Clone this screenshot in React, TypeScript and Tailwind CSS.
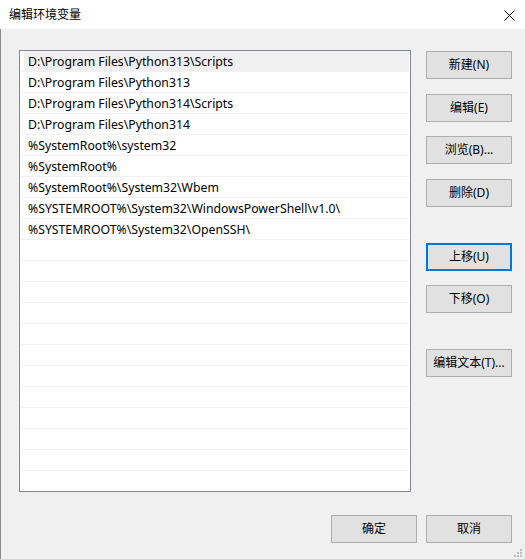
const paths = [
  "D:\\Program Files\\Python313\\Scripts",
  "D:\\Program Files\\Python313",
  "D:\\Program Files\\Python314\\Scripts",
  "D:\\Program Files\\Python314",
  "%SystemRoot%\\system32",
  "%SystemRoot%",
  "%SystemRoot%\\System32\\Wbem",
  "%SYSTEMROOT%\\System32\\WindowsPowerShell\\v1.0\\",
  "%SYSTEMROOT%\\System32\\OpenSSH\\",
];

// the list view always shows 21 grid rows, blank ones included
const rows = [...paths, ...Array(21 - paths.length).fill("")];

const font = { fontFamily: '"Noto Sans", "Noto Sans CJK SC", sans-serif' };

function Button({
  label,
  focused,
  className = "",
}: {
  label: string;
  focused?: boolean;
  className?: string;
}) {
  return (
    <button
      className={`w-[86px] h-[28px] shrink-0 flex items-center justify-center bg-[#e1e1e1] text-[12px] text-black leading-none ${
        focused ? "border-2 border-[#0078d7]" : "border border-[#adadad]"
      } ${className}`}
    >
      {label}
    </button>
  );
}

export default function App() {
  return (
    <div className="w-[525px] h-[559px] flex flex-col bg-[#f0f0f0] overflow-hidden" style={font}>
      {/* Title bar */}
      <div className="h-[29px] shrink-0 bg-white flex items-center justify-between pl-[9px] pr-[10px]">
        <span className="text-[12px] text-black">编辑环境变量</span>
        <svg width="11" height="11" viewBox="0 0 11 11" className="mt-[1px]">
          <path d="M0.5 0.5 L10.5 10.5 M10.5 0.5 L0.5 10.5" stroke="#000" strokeWidth="1" />
        </svg>
      </div>

      {/* Body */}
      <div className="relative flex-1 flex flex-col border-l border-[#8a8a8a] pl-[18px] pr-[13px] pt-[21px]">
        <div className="flex gap-[15px]">
          {/* Path list */}
          <div className="w-[392px] h-[442px] border border-[#828790] bg-white px-[1px] overflow-hidden">
            {rows.map((p, i) => (
              <div key={i} className="h-[21px] shrink-0 border-b border-[#f0f0f0] flex">
                <div
                  className={`flex-1 ml-[3px] flex items-center pl-[4px] pt-[3px] text-[12.25px] text-black whitespace-nowrap ${
                    i === 0 ? "bg-[#f0f0f0]" : ""
                  }`}
                >
                  {p}
                </div>
              </div>
            ))}
          </div>

          {/* Action buttons */}
          <div className="flex flex-col pt-[1px]">
            <Button label="新建(N)" />
            <Button label="编辑(E)" className="mt-[15px]" />
            <Button label="浏览(B)..." className="mt-[14px]" />
            <Button label="删除(D)" className="mt-[15px]" />
            <Button label="上移(U)" focused className="mt-[36px]" />
            <Button label="下移(O)" className="mt-[14px]" />
            <Button label="编辑文本(T)..." className="mt-[36px]" />
          </div>
        </div>

        {/* Dialog buttons */}
        <div className="flex justify-end gap-[9px] mt-[23px]">
          <Button label="确定" />
          <Button label="取消" />
        </div>

        {/* Resize grip */}
        <svg width="9" height="9" viewBox="0 0 9 9" className="absolute right-[2px] bottom-[1px]">
          <g fill="#bcbcbc">
            <rect x="6" y="0" width="2" height="2" />
            <rect x="3" y="3" width="2" height="2" />
            <rect x="6" y="3" width="2" height="2" />
            <rect x="0" y="6" width="2" height="2" />
            <rect x="3" y="6" width="2" height="2" />
            <rect x="6" y="6" width="2" height="2" />
          </g>
        </svg>
      </div>
    </div>
  );
}
